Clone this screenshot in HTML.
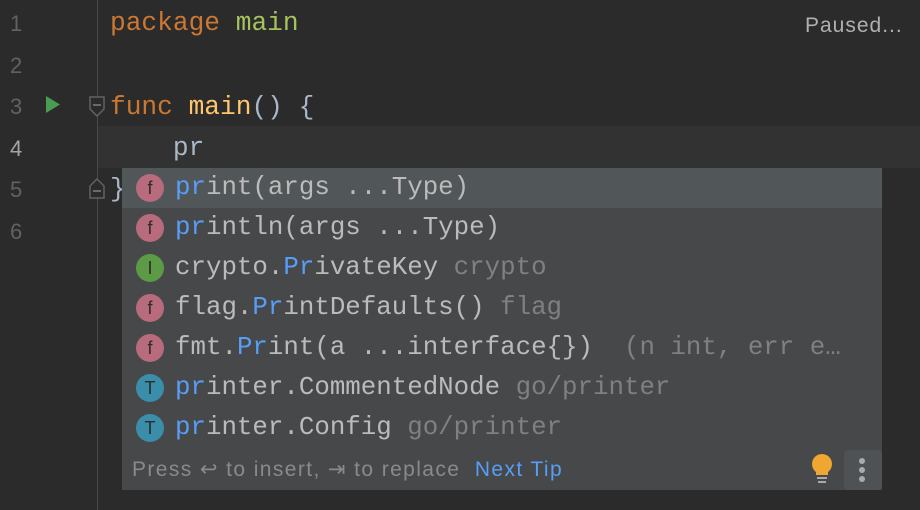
<!DOCTYPE html>
<html><head><style>
body{margin:0;width:920px;height:510px;background:#2b2b2b;overflow:hidden;position:relative;font-family:"Liberation Mono",monospace;}
.cl{position:absolute;left:98px;top:126px;width:822px;height:42px;background:#323232;}
.vl{position:absolute;left:97px;top:0;width:1px;height:510px;background:#4a4a4a;}
.ln{position:absolute;left:10px;color:#5f6266;font-family:"Liberation Sans",sans-serif;font-size:22px;}
.code{position:absolute;left:110px;font-size:26.2px;white-space:pre;line-height:42px;color:#a9b7c6;}
.kw{color:#cc7832}.pk{color:#a5c25c}.fn{color:#ffc66d}
.pop{position:absolute;left:122px;top:168px;width:760px;height:322px;background:#46484a;}
.row{position:absolute;left:0;width:760px;height:40px;font-size:25.8px;white-space:pre;line-height:40px;color:#bbbbbb;}
.row .t{position:absolute;left:53px;top:0}
.ic{position:absolute;left:14px;top:6px;width:28px;height:28px;border-radius:50%;font-family:"Liberation Sans",sans-serif;font-size:18px;line-height:28px;text-align:center;color:#2b2b2b;}
.f{background:#b86b7c}.i{background:#5d9a46}.T{background:#3b8ea9}
.m{color:#589df6}.g{color:#808080}
.foot{position:absolute;left:10px;top:289px;font-family:"Liberation Sans",sans-serif;font-size:21px;letter-spacing:1.4px;color:#8a8a8a;white-space:pre;}
</style></head><body>
<div class="cl"></div>
<div class="vl"></div>
<div class="ln" style="top:11px">1</div>
<div class="ln" style="top:53px">2</div>
<div class="ln" style="top:94px">3</div>
<div class="ln" style="top:136px;color:#a4a4a4">4</div>
<div class="ln" style="top:177px">5</div>
<div class="ln" style="top:219px">6</div>
<svg style="position:absolute;left:44px;top:95px" width="18" height="20"><path d="M2 1 L16 9.5 L2 18 Z" fill="#499c54"/></svg>
<svg style="position:absolute;left:88px;top:95px" width="20" height="25"><path d="M2 2 H16 V14 L9 21 L2 14 Z" fill="#2b2b2b" stroke="#606366" stroke-width="1.5"/><path d="M5 10 H13" stroke="#808080" stroke-width="1.5"/></svg>
<svg style="position:absolute;left:88px;top:176px" width="20" height="25"><path d="M2 22 H16 V10 L9 3 L2 10 Z" fill="#2b2b2b" stroke="#606366" stroke-width="1.5"/><path d="M5 15 H13" stroke="#808080" stroke-width="1.5"/></svg>
<div class="code" style="top:2px"><span class="kw">package</span> <span class="pk">main</span></div>
<div class="code" style="top:86px"><span class="kw">func</span> <span class="fn">main</span>() {</div>
<div class="code" style="top:127px">    pr</div>
<div class="code" style="top:168px">}</div>
<div style="position:absolute;left:805px;top:14px;font-family:'Liberation Sans',sans-serif;font-size:21px;letter-spacing:1px;color:#b0b0b0">Paused...</div>
<div class="pop">
<div class="row" style="top:0;background:#515658"><span class="ic f">f</span><span class="t"><span class="m">pr</span>int(args ...Type)</span></div>
<div class="row" style="top:40px"><span class="ic f">f</span><span class="t"><span class="m">pr</span>intln(args ...Type)</span></div>
<div class="row" style="top:80px"><span class="ic i">I</span><span class="t">crypto.<span class="m">Pr</span>ivateKey <span class="g">crypto</span></span></div>
<div class="row" style="top:120px"><span class="ic f">f</span><span class="t">flag.<span class="m">Pr</span>intDefaults() <span class="g">flag</span></span></div>
<div class="row" style="top:160px"><span class="ic f">f</span><span class="t">fmt.<span class="m">Pr</span>int(a ...interface{})  <span class="g">(n int, err e…</span></span></div>
<div class="row" style="top:200px"><span class="ic T">T</span><span class="t"><span class="m">pr</span>inter.CommentedNode <span class="g">go/printer</span></span></div>
<div class="row" style="top:240px"><span class="ic T">T</span><span class="t"><span class="m">pr</span>inter.Config <span class="g">go/printer</span></span></div>
<div class="foot">Press ↩ to insert, ⇥ to replace  <span style="color:#589df6">Next Tip</span></div>
<svg style="position:absolute;left:688px;top:286px" width="24" height="32"><ellipse cx="12" cy="10" rx="10" ry="10" fill="#f0a732"/><rect x="6" y="12" width="12" height="9" fill="#f0a732"/><rect x="7" y="23" width="10" height="2" fill="#aaa"/><rect x="8" y="27" width="8" height="2" fill="#aaa"/></svg>
<div style="position:absolute;left:722px;top:282px;width:38px;height:40px;background:#4e5254;border-radius:4px"></div>
<svg style="position:absolute;left:734px;top:288px" width="12" height="30"><circle cx="6" cy="5" r="3" fill="#aaa"/><circle cx="6" cy="14" r="3" fill="#aaa"/><circle cx="6" cy="23" r="3" fill="#aaa"/></svg>
</div>
</body></html>
